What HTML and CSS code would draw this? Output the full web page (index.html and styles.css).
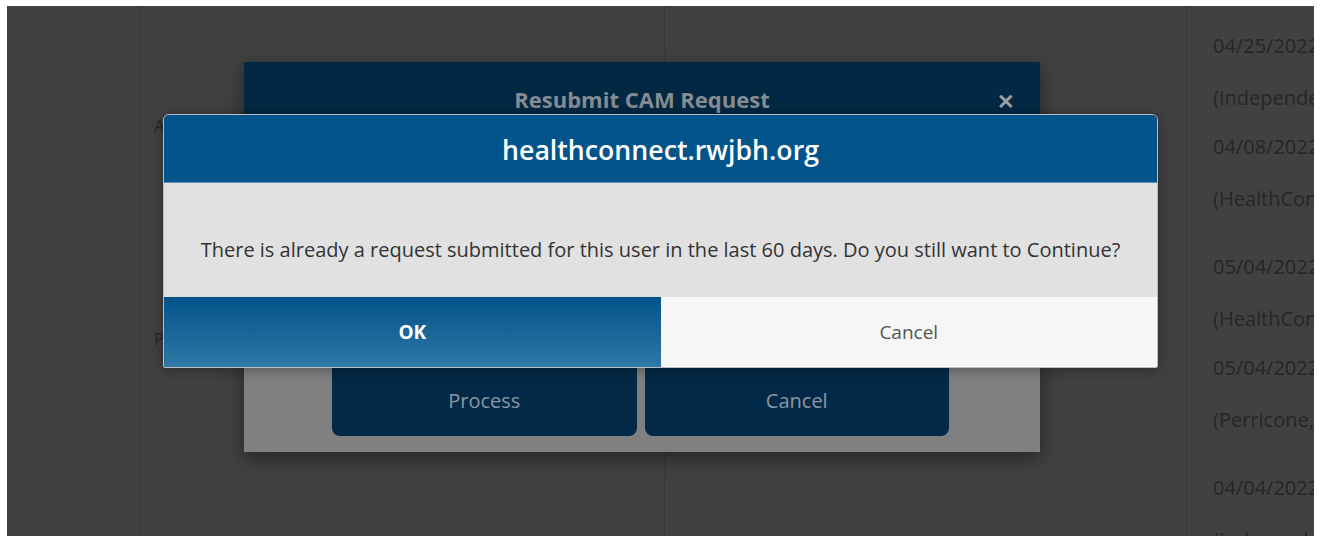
FILE: index.html
```html
<!DOCTYPE html>
<html lang="en">
<head>
<meta charset="utf-8">
<title>Resubmit CAM Request</title>
<link rel="stylesheet" href="styles.css">
</head>
<body>
<div class="screen">
  <div class="grid">
    <div class="col col-side"></div>
    <div class="col col-labels">
      <div class="label label-a">Associate</div>
      <div class="label label-p">Priority</div>
    </div>
    <div class="col col-mid"></div>
    <div class="col col-history">
      <div class="entry">
        <div class="line">04/25/2022</div>
        <div class="line">(Independent)</div>
      </div>
      <div class="entry entry-tall">
        <div class="line">04/08/2022</div>
        <div class="line">(HealthConnect)</div>
      </div>
      <div class="entry">
        <div class="line">05/04/2022</div>
        <div class="line">(HealthConnect)</div>
      </div>
      <div class="entry entry-tall">
        <div class="line">05/04/2022</div>
        <div class="line">(Perricone, J)</div>
      </div>
      <div class="entry">
        <div class="line">04/04/2022</div>
        <div class="line">(Independent)</div>
      </div>
    </div>
  </div>

  <!-- underlying resubmit modal -->
  <div class="modal">
    <div class="modal-head">
      <span class="modal-title">Resubmit CAM Request</span>
      <span class="modal-close">&#x2715;</span>
    </div>
    <div class="modal-body"></div>
    <div class="modal-actions">
      <button class="modal-btn">Process</button>
      <button class="modal-btn">Cancel</button>
    </div>
  </div>

  <!-- confirm dialog on top -->
  <div class="confirm">
    <div class="confirm-head">healthconnect.rwjbh.org</div>
    <div class="confirm-body">There is already a request submitted for this user in the last 60 days. Do you still want to Continue?</div>
    <div class="confirm-actions">
      <button class="confirm-btn confirm-ok">OK</button>
      <button class="confirm-btn confirm-cancel">Cancel</button>
    </div>
  </div>
</div>
</body>
</html>
```

FILE: styles.css
```css
html, body {
  margin: 0;
  padding: 0;
  background: #ffffff;
  height: 100%;
  overflow: hidden;
}

body {
  padding: 6px 7px 0 7px;
  box-sizing: border-box;
  font-family: "Open Sans", "Noto Sans", sans-serif;
}

.screen {
  position: relative;
  height: 100%;
  background: #414141;
  overflow: hidden;
}

.grid {
  display: grid;
  grid-template-columns: 133px 525px 522px 1fr;
  height: 100%;
}

.col {
  border-right: 1px solid #393939;
}

.col-history {
  border-right: none;
  padding-left: 26px;
  padding-top: 28px;
  white-space: nowrap;
  overflow: hidden;
}

.col-labels {
  padding-left: 14px;
}

.label {
  color: #262626;
  font-size: 17px;
}

.label-a {
  margin-top: 108px;
}

.label-p {
  margin-top: 190px;
}

.entry {
  display: flex;
  flex-direction: column;
  gap: 28px;
  padding-bottom: 25px;
}

.entry-tall {
  padding-bottom: 44px;
}

.line {
  color: #262626;
  font-size: 20px;
  line-height: 24px;
}

/* resubmit modal */
.modal {
  position: absolute;
  left: 237px;
  top: 56px;
  width: 796px;
  height: 390px;
  background: #808080;
  box-shadow: 0 6px 18px rgba(0, 0, 0, 0.45);
  display: flex;
  flex-direction: column;
}

.modal-head {
  position: relative;
  height: 76px;
  background: #022843;
  display: flex;
  align-items: flex-start;
  justify-content: center;
  padding-top: 22px;
  box-sizing: border-box;
}

.modal-title {
  color: #878c93;
  font-size: 22px;
  font-weight: 700;
}

.modal-close {
  position: absolute;
  right: 25px;
  top: 25px;
  color: #9aa0a6;
  font-size: 21px;
  font-weight: 700;
}

.modal-body {
  flex: 1;
}

.modal-actions {
  display: flex;
  gap: 8px;
  padding: 0 91px 16px 88px;
}

.modal-btn {
  flex: 1;
  height: 86px;
  border: none;
  border-radius: 0 0 8px 8px;
  background: #022a48;
  color: #8b96a2;
  font-family: inherit;
  font-size: 20px;
  padding-top: 16px;
}

/* confirm dialog */
.confirm {
  position: absolute;
  left: 156px;
  top: 108px;
  width: 995px;
  height: 254px;
  box-sizing: border-box;
  border: 1px solid #b9bec4;
  border-radius: 6px 6px 2px 2px;
  overflow: hidden;
  box-shadow: 0 2px 14px rgba(0, 0, 0, 0.35);
  display: flex;
  flex-direction: column;
}

.confirm-head {
  height: 68px;
  background: #02548b;
  border-bottom: 1px solid #5b8db5;
  box-sizing: border-box;
  color: #ffffff;
  font-size: 26.7px;
  font-weight: 600;
  display: flex;
  align-items: center;
  justify-content: center;
  padding-top: 2px;
}

.confirm-body {
  height: 114px;
  box-sizing: border-box;
  padding-top: 18px;
  background: #e1e1e1;
  color: #333333;
  font-size: 20px;
  display: flex;
  align-items: center;
  justify-content: center;
}

.confirm-actions {
  flex: 1;
  display: flex;
}

.confirm-btn {
  flex: 1;
  border: none;
  font-family: inherit;
  font-size: 19px;
}

.confirm-ok {
  background: linear-gradient(#02528a, #2f78a7);
  color: #ffffff;
  font-weight: 700;
}

.confirm-cancel {
  background: #f6f6f6;
  color: #555555;
}
```
